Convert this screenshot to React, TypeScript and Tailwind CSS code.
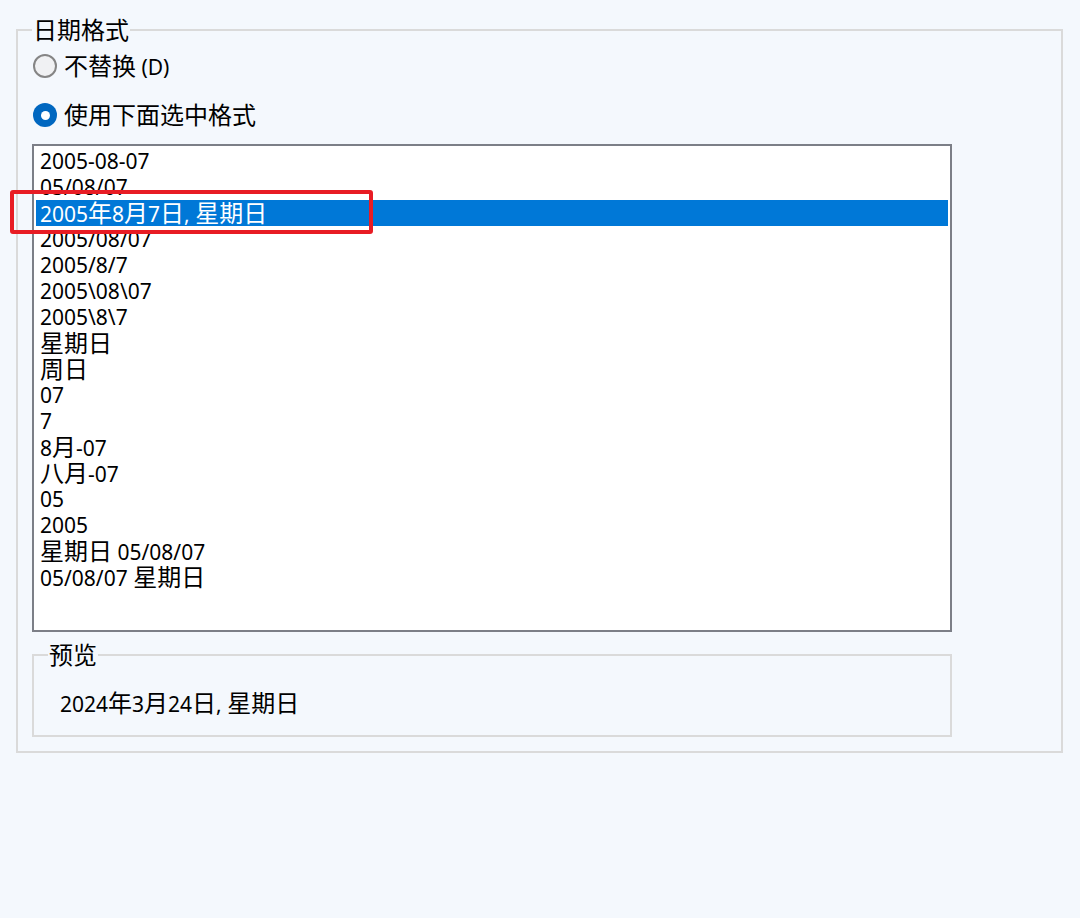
const formats = [
  "2005-08-07",
  "05/08/07",
  "2005年8月7日, 星期日",
  "2005/08/07",
  "2005/8/7",
  "2005\\08\\07",
  "2005\\8\\7",
  "星期日",
  "周日",
  "07",
  "7",
  "8月-07",
  "八月-07",
  "05",
  "2005",
  "星期日 05/08/07",
  "05/08/07 星期日",
];

const SELECTED = 2;

// Windows draws the CJK runs a bit larger than the latin ones
function MixedText({ text }: { text: string }) {
  const parts = text.split(/([\u4e00-\u9fff]+)/).filter(Boolean);
  return (
    <>
      {parts.map((part, i) =>
        /[\u4e00-\u9fff]/.test(part) ? (
          <span className="inline-block h-[26px] text-[24px] leading-[26px]" key={i}>
            {part}
          </span>
        ) : (
          <span className="inline-block h-[26px] whitespace-pre leading-[26px]" key={i}>
            {part}
          </span>
        ),
      )}
    </>
  );
}

function Radio({ checked, label }: { checked?: boolean; label: React.ReactNode }) {
  return (
    <div className="flex h-[30px] items-center">
      {checked ? (
        <span className="flex size-[24px] items-center justify-center rounded-full bg-[#0067c0]">
          <span className="size-[9px] rounded-full bg-white" />
        </span>
      ) : (
        <span className="size-[24px] rounded-full border-2 border-[#858585] bg-[#f0f1f3]" />
      )}
      <span className="ml-[7px] leading-[30px]">{label}</span>
    </div>
  );
}

export default function App() {
  return (
    <div
      className="relative h-[918px] w-[1080px] overflow-hidden bg-[#f4f8fd] text-[21px] text-black"
      style={{ fontFamily: '"Noto Sans", "Noto Sans CJK SC", sans-serif' }}
    >
      <fieldset className="ml-[16px] mt-[17px] w-[1047px] border-2 border-[#dadada] pb-[14px] pl-[14px]">
        <legend className="bg-[#f4f8fd] px-[1px] text-[24px] leading-[26px]">日期格式</legend>

        <div className="mt-[8px] pl-[1px]">
          <Radio label={<><span className="text-[24px]">不替换</span> (D)</>} />
        </div>
        <div className="mt-[19px] pl-[1px]">
          <Radio checked label={<span className="text-[24px]">使用下面选中格式</span>} />
        </div>

        <div className="mt-[14px] h-[488px] w-[920px] border-2 border-[#7c7f87] bg-white pt-[2px]">
          {formats.map((f, i) =>
            i === SELECTED ? (
              <div className="relative mx-[2px] h-[26px] bg-[#0078d7] pl-[4px] leading-[26px] text-white" key={f}>
                <MixedText text={f} />
              </div>
            ) : (
              <div className="mx-[2px] h-[26px] pl-[4px] leading-[26px]" key={f}>
                <MixedText text={f} />
              </div>
            ),
          )}
        </div>

        <fieldset className="mt-[10px] w-[920px] border-2 border-[#dadada] pb-[19px] pl-[14px]">
          <legend className="bg-[#f4f8fd] px-[1px] text-[24px] leading-[26px]">预览</legend>
          <div className="mt-[22px] h-[26px] pl-[12px] leading-[26px]">
            <MixedText text="2024年3月24日, 星期日" />
          </div>
        </fieldset>
      </fieldset>

      <div className="pointer-events-none absolute left-[10px] top-[190px] h-[44px] w-[363px] rounded-[3px] border-4 border-[#e81c24]" />
    </div>
  );
}
